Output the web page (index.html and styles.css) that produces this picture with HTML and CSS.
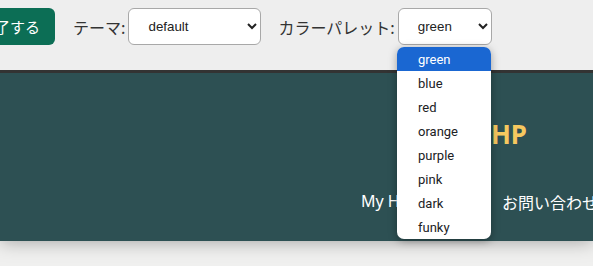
FILE: index.html
```html
<!DOCTYPE html>
<html lang="ja">
<head>
  <meta charset="UTF-8" />
  <meta name="viewport" content="width=device-width, initial-scale=1.0"/>
  <title>My HP</title>
  <link rel="stylesheet" href="styles.css">
</head>
<body>
  <div class="toolbar">
    <button class="btn-done">編集を終了する</button>
    <label class="field">テーマ:
      <select class="picker picker-theme">
        <option>default</option>
      </select>
    </label>
    <label class="field">カラーパレット:
      <select class="picker picker-palette">
        <option>green</option>
      </select>
    </label>

    <!-- ドロップダウン (開いた状態) -->
    <ul class="popup">
      <li class="selected">green</li>
      <li>blue</li>
      <li>red</li>
      <li>orange</li>
      <li>purple</li>
      <li>pink</li>
      <li>dark</li>
      <li>funky</li>
    </ul>
  </div>

  <header>
    <h1 class="site-title">My HP</h1>
    <nav>
      <a href="#">My Hobby</a>
      <a href="#">お問い合わせ</a>
    </nav>
  </header>
</body>
</html>
```

FILE: styles.css
```css
html, body {
  overflow: hidden;
}
body {
  margin: 0;
  padding: 0;
  background: #f0f0ef;
  font-family: "Noto Sans", "Noto Sans CJK JP", sans-serif;
  height: 266px;
}
.toolbar {
  position: relative;
  display: flex;
  align-items: center;
  background: #eeeeee;
  padding: 8px 0 25px 0;
  margin-left: -77px;
}
.btn-done {
  height: 37px;
  padding: 0 15px 0 12px;
  background: #0c6e55;
  color: white;
  border: none;
  border-radius: 6px;
  font-size: 15px;
  font-family: "Noto Sans CJK JP", sans-serif;
  margin-right: 18px;
}
.field {
  display: flex;
  align-items: center;
  gap: 3px;
  font-size: 16px;
  color: #333;
  font-family: "Noto Sans CJK JP", sans-serif;
  margin-right: 17px;
}
.picker {
  height: 37px;
  padding: 0 10px 0 15px;
  background: white;
  border: 1px solid #a8a8a8;
  border-radius: 6px;
  font-family: "Liberation Sans", Arial, sans-serif;
  font-size: 13.33px;
  color: #222;
}
.picker-theme {
  width: 133px;
}
.picker-palette {
  width: 94px;
}
.popup {
  position: absolute;
  left: 474px;
  top: 47px;
  width: 94px;
  margin: 0;
  padding: 0;
  list-style: none;
  background: white;
  border-radius: 7px;
  overflow: hidden;
  box-shadow: 0 2px 8px rgba(0, 0, 0, 0.35);
  z-index: 10;
  font-family: Roboto, sans-serif;
  font-size: 13px;
  color: #202124;
}
.popup li {
  height: 24px;
  line-height: 25px;
  padding-left: 21px;
}
.popup li.selected {
  background: #1a67d2;
  color: white;
}
header {
  background: #2d5053;
  border-top: 3px solid #333;
  height: 168px;
  box-shadow: 0 0 18px rgba(0, 0, 0, 0.35);
}
.site-title {
  margin: 0;
  padding: 44px 66px 0 0;
  text-align: right;
  font-size: 26px;
  font-weight: bold;
  color: #f6c85f;
  line-height: 34px;
}
nav {
  display: flex;
  gap: 65px;
  padding: 39px 0 0 361px;
  white-space: nowrap;
}
nav a {
  color: white;
  text-decoration: none;
  font-size: 16px;
}
```
